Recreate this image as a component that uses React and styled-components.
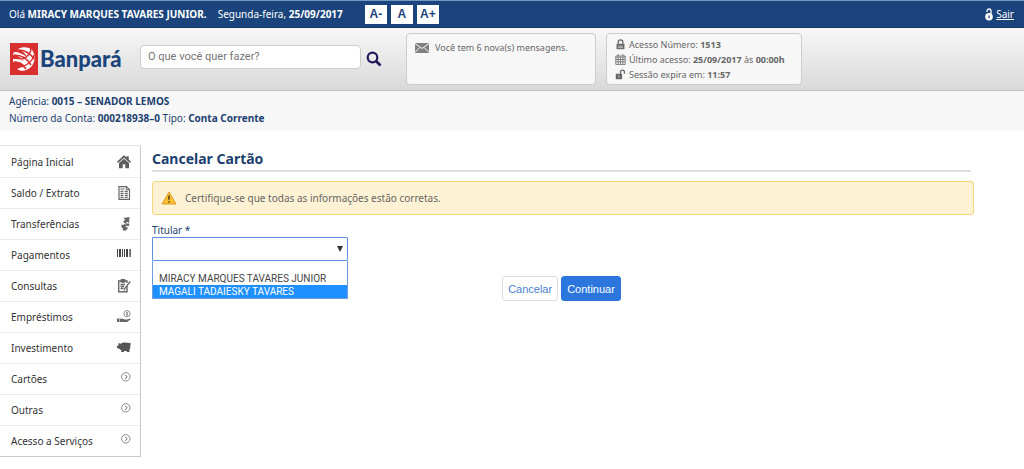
import React, { useState } from 'react';
import styled, { createGlobalStyle, ThemeProvider } from 'styled-components';

const theme = {
    navy: '#1a447b',
    ink: '#1c3f70',
    grey: '#666666',
    line: '#c9c9c9',
    blue: '#2a76dd',
    sans: '"Noto Sans", "Open Sans", sans-serif',
    arial: '"Liberation Sans", Arial, sans-serif',
};

const GlobalStyle = createGlobalStyle`
    * {
        box-sizing: border-box;
    }
    body {
        margin: 0;
        background: #ffffff;
        color: ${theme.ink};
        font-family: ${theme.sans};
        font-size: 10px;
    }
    button, input, select {
        font-family: inherit;
    }
    svg {
        flex: none;
    }
`

const TopBar = styled.div`
    display: flex;
    align-items: center;
    gap: 11px;
    height: 28px;
    padding: 0 10px 0 9px;
    color: #ffffff;
    background: ${props => props.theme.navy};
    border-top: 1px solid #6f9bc4;
    border-bottom: 1px solid #14365f;
`

const Greeting = styled.span`
    white-space: nowrap;
`

const FontSizes = styled.div`
    display: flex;
    gap: 4px;
    margin-left: 11px;
`

const FontButton = styled.button`
    width: 22px;
    height: 19px;
    padding: 0;
    border: 0;
    color: ${props => props.theme.navy};
    background: #ffffff;
    font-family: ${props => props.theme.arial};
    font-size: 12px;
    font-weight: bold;
`

const Exit = styled.a`
    display: flex;
    align-items: center;
    gap: 3px;
    margin-left: auto;
    color: #ffffff;
    text-decoration: none;
    span {
        text-decoration: underline;
    }
`

const Header = styled.header`
    display: flex;
    align-items: center;
    height: 63px;
    padding: 0 10px;
    background: linear-gradient(#f7f7f7, #d9d9d9);
    border-bottom: 1px solid #c4c4c4;
`

const Logo = styled.a`
    display: flex;
    align-items: center;
    gap: 2px;
    width: 130px;
    color: ${props => props.theme.navy};
    font-family: Lato, sans-serif;
    font-size: 22px;
    font-weight: 900;
    line-height: 30px;
    text-decoration: none;
`

const Search = styled.form`
    display: flex;
    align-items: center;
    gap: 5px;
    margin: 0 24px 5px 0;
    input {
        width: 221px;
        height: 24px;
        padding: 0 7px;
        border: 1px solid #cccccc;
        border-radius: 4px;
        background: #ffffff;
        font-family: Roboto, sans-serif;
        font-size: 11px;
    }
    input::placeholder {
        color: #757575;
    }
    button {
        display: flex;
        margin-top: 4px;
        padding: 0;
        border: 0;
        background: none;
    }
`

const InfoBox = styled.div`
    width: ${props => props.$width};
    height: 52px;
    margin-right: 10px;
    padding: 3px 8px;
    color: ${props => props.theme.grey};
    background: #f7f7f7;
    border: 1px solid #cccccc;
    border-radius: 4px;
    font-size: 9px;
`

const InfoLine = styled.div`
    display: flex;
    align-items: center;
    gap: ${props => props.$gap || '3px'};
    height: ${props => props.$height || '15px'};
    white-space: nowrap;
`

const Account = styled.section`
    padding: 2px 9px 4px;
    background: #f7f7f7;
    line-height: 17px;
    p {
        margin: 0;
    }
`

const Page = styled.div`
    display: flex;
    align-items: flex-start;
    margin-top: 14px;
`

const Menu = styled.nav`
    flex: none;
    width: 141px;
    border: 1px solid ${props => props.theme.line};
    border-left: 0;
    border-top-color: #e5e5e5;
`

const MenuItem = styled.a`
    display: flex;
    align-items: center;
    justify-content: space-between;
    height: 31px;
    padding: 0 9px 0 11px;
    color: #333333;
    text-decoration: none;
    & + & {
        border-top: 1px solid #e9e9e9;
    }
    svg {
        width: 14px;
        height: 14px;
    }
`

const Content = styled.main`
    flex: 1;
    padding: 3px 50px 0 11px;
`

const Title = styled.h1`
    margin: 0 3px 9px 0;
    color: ${props => props.theme.ink};
    border-bottom: 2px solid #dddddd;
    font-size: 14px;
    line-height: 22px;
`

const Alert = styled.div`
    display: flex;
    align-items: center;
    gap: 8px;
    height: 34px;
    padding: 0 8px;
    color: ${props => props.theme.grey};
    background: #fdf2d3;
    border: 1px solid #f5d77c;
    border-radius: 3px;
`

const Label = styled.label`
    display: block;
    margin-top: 8px;
    line-height: 14px;
`

const SelectWrap = styled.div`
    position: relative;
    width: 196px;
    select {
        display: block;
        width: 100%;
        height: 24px;
        padding: 0 6px;
        appearance: none;
        border: 1px solid #5b8fe0;
        border-radius: 1px;
        background: #ffffff;
        outline: 0;
    }
`

const Arrow = styled.svg`
    position: absolute;
    top: 9px;
    right: 5px;
    pointer-events: none;
`

const Options = styled.ul`
    position: absolute;
    top: 100%;
    left: 0;
    width: 100%;
    margin: 0;
    padding: 0;
    list-style: none;
    background: #ffffff;
    border: 1px solid #6f9be0;
    border-top: 0;
    font-family: Roboto, sans-serif;
`

const Option = styled.li`
    height: 13px;
    padding-left: 6px;
    color: ${props => (props.$active ? '#ffffff' : '#444444')};
    background: ${props => (props.$active ? '#1e90ff' : 'transparent')};
    line-height: 13px;
    white-space: nowrap;
    &:first-child {
        height: 11px;
    }
`

const Actions = styled.div`
    display: flex;
    justify-content: center;
    gap: 3px;
    margin: 15px 3px 0 0;
`

const Action = styled.button`
    height: 25px;
    padding: 0 5px;
    color: ${props => (props.$primary ? '#ffffff' : '#4b7fd0')};
    background: ${props => (props.$primary ? props.theme.blue : '#ffffff')};
    border: 1px solid ${props => (props.$primary ? props.theme.blue : '#dddddd')};
    border-radius: 3px;
    font-family: ${props => props.theme.arial};
    font-size: 11px;
`

const Svg = ({ children, size = 14, ...rest }) => (
    <svg width={size} height={size} viewBox="0 0 14 14" fill="none" stroke="#666666" aria-hidden="true" {...rest}>
        {children}
    </svg>
)

const icons = {
    home: (
        <Svg fill="#5c5c5c" stroke="none">
            <path d="M7 .3l2.5 2.2V1.2h2.2v3.3L14 6.7l-1 1.2-6-5.2-6 5.2-1-1.2z" />
            <path d="M2 8l5-4.3L12 8v5.3H8.3V9.3H5.7v4H2z" />
        </Svg>
    ),
    statement: (
        <Svg>
            <path d="M2 .7h7.5L12.5 3.7v9.6H2z" strokeWidth="1.2" />
            <path d="M9.3.7v3h3" />
            <path d="M3.5 3h4M3.5 5.3h3M7.8 5.3h3M3.5 7.3h3M7.8 7.3h3M3.5 9.3h3M7.8 9.3h3M3.5 11.3h3M7.8 11.3h3" strokeWidth="1.2" />
        </Svg>
    ),
    transfer: (
        <Svg fill="#666666" stroke="none">
            <path d="M12.5 0L12 6l-1.6-1.3-2 2.1-2.3-2.1 2-2L6.500 1z" />
            <path d="M4.500 7.600L6.300 8l1.500-1.200 2 1.700-1.500 1.600 3 .400L9 13.500H5.500l.600-1.900-1.800-1.600z" />
            <path d="M8.500 6.500h3.700V9H9.800z" />
        </Svg>
    ),
    barcode: (
        <Svg stroke="none" fill="#444444">
            <path d="M0 1h1v8H0zM2 1h2v8H2zM5 1h1v8H5zM7 1h1v8H7zM9 1h2v8H9zM12 1h.6v8H12zM13.2 1h.8v8h-.8z" />
        </Svg>
    ),
    clipboard: (
        <Svg>
            <path d="M10 7v5.8H1.7V2H10v2" strokeWidth="1.4" />
            <path d="M4 .5h4v2.7H4z" fill="#666666" />
            <path d="M3.500 5.500h4.500M3.500 7.500h3.500M3.500 9.500h3M13.300 2.500L8 9l-.8 2.200" strokeWidth="1.3" />
        </Svg>
    ),
    loan: (
        <Svg>
            <circle cx="10" cy="3.700" r="3.100" stroke="#888888" />
            <path d="M10 2v3.400M9 2.900h2M9 4.700h2" strokeWidth=".7" />
            <path d="M0 8.500h2.500V12H0zM3 8.700h3l1.500.9H10l3-1.100.8.8L10 12H3z" fill="#666666" stroke="none" />
        </Svg>
    ),
    pig: (
        <Svg fill="#555555" stroke="none">
            <path d="M0 5l1.600-.8L1.500 2l2.200.8C5 1.300 9.500 1 11.500 2L13 1.700l1 1.500-.8.8c.5 1.900.1 3.300-.7 4.400V11h-2.700V9.900H7V11H4.300V9.500L2.700 8 0 7z" />
        </Svg>
    ),
    chevron: (
        <Svg>
            <circle cx="8.800" cy="4.800" r="4.200" stroke="#888888" />
            <path d="M8 2.700l2.100 2.100L8 6.900" />
        </Svg>
    ),
}

const Padlock = ({ open, color = '#666666' }) => (
    <Svg size={11} stroke={color}>
        <path d={open ? 'M7 6V4a2.500 2.500 0 015 0v2' : 'M4 6V4a3 3 0 016 0v2'} strokeWidth="1.6" />
        <path d={open ? 'M1 6h8v7H1z' : 'M2 6h10v7H2z'} fill={color} stroke="none" />
        <path d={open ? 'M5 8v3' : 'M4 9h6M4 11h6'} stroke="#f7f7f7" strokeWidth=".8" />
    </Svg>
)

const menu = [
    ['Página Inicial', 'home'],
    ['Saldo / Extrato', 'statement'],
    ['Transferências', 'transfer'],
    ['Pagamentos', 'barcode'],
    ['Consultas', 'clipboard'],
    ['Empréstimos', 'loan'],
    ['Investimento', 'pig'],
    ['Cartões', 'chevron'],
    ['Outras', 'chevron'],
    ['Acesso a Serviços', 'chevron'],
]

const holders = ['', 'MIRACY MARQUES TAVARES JUNIOR', 'MAGALI TADAIESKY TAVARES']

export default function App () {
    const [holder, setHolder] = useState('')
    const [active, setActive] = useState(2)

    return (
        <ThemeProvider theme={theme}>
            <GlobalStyle />
            <TopBar>
                <Greeting>Olá <b>MIRACY MARQUES TAVARES JUNIOR.</b></Greeting>
                <Greeting>Segunda-feira, <b>25/09/2017</b></Greeting>
                <FontSizes>
                    <FontButton>A-</FontButton>
                    <FontButton>A</FontButton>
                    <FontButton>A+</FontButton>
                </FontSizes>
                <Exit href="#sair">
                    <svg width="8" height="13" viewBox="0 0 8 13" fill="none" aria-hidden="true">
                        <path d="M2 4V3a2 2 0 014 0v4" stroke="#ffffff" strokeWidth="1.3" />
                        <circle cx="4" cy="8.8" r="3.8" fill="#ffffff" />
                        <path d="M4 7.5v2.8" stroke="#1a447b" strokeWidth="1.2" />
                    </svg>
                    <span>Sair</span>
                </Exit>
            </TopBar>
            <Header>
                <Logo href="#inicio">
                    <svg width="28" height="32" viewBox="0 0 28 32" fill="none" aria-hidden="true">
                        <path d="M0 0h28v32H0z" fill="#d9302f" />
                        <path d="M8 6c5-3 11-2 14 1 4 5 3 13-1 17-4 4-10 5-14 2 3-1 5-2 7-4-3-3-7-4-11-3v-3c4 0 8 0 11 2-3-4-7-6-11-6l1-3c5 0 9 2 13 5-2-4-5-7-10-8z" fill="#ffffff" />
                        <path d="M8 7c7 0 12 3 16 9M4 12c7 0 13 3 17 10M4 19c5 0 9 2 12 7" stroke="#d9302f" strokeWidth="1.6" />
                        <path d="M21 5c0 6-3 9-9 11M24 12c-1 6-5 9-12 12" stroke="#d9302f" strokeWidth="1.4" />
                    </svg>
                    Banpará
                </Logo>
                <Search onSubmit={e => e.preventDefault()}>
                    <input type="text" aria-label="Busca" placeholder="O que você quer fazer?" />
                    <button aria-label="Buscar">
                        <svg width="16" height="16" viewBox="0 0 16 16" fill="none" stroke="#201a5c" aria-hidden="true">
                            <circle cx="6.5" cy="6.5" r="4.8" strokeWidth="2.2" />
                            <path d="M10 10l4.5 4.5" strokeWidth="2.8" />
                        </svg>
                    </button>
                </Search>
                <InfoBox $width="190px">
                    <InfoLine $gap="6px" $height="21px">
                        <svg width="14" height="10" viewBox="0 0 14 10" aria-hidden="true">
                            <path d="M0 0h14v10H0z" fill="#808080" />
                            <path d="M0 .5l7 5 7-5M0 9.5l4.8-5M14 9.5l-4.8-5" fill="none" stroke="#f7f7f7" />
                        </svg>
                        Você tem 6 nova(s) mensagens.
                    </InfoLine>
                </InfoBox>
                <InfoBox $width="196px">
                    <InfoLine>
                        <Padlock />
                        <span>Acesso Número: <b>1513</b></span>
                    </InfoLine>
                    <InfoLine>
                        <Svg size={11}>
                            <path d="M1 2.5h12v10.800H1zM1 4h12M1 7h12M1 10h12M4 4v9M7 4v9M10 4v9M4 0v3M10 0v3" />
                        </Svg>
                        <span>Último acesso: <b>25/09/2017</b> às <b>00:00h</b></span>
                    </InfoLine>
                    <InfoLine>
                        <Padlock open />
                        <span>Sessão expira em: <b>11:57</b></span>
                    </InfoLine>
                </InfoBox>
            </Header>
            <Account>
                <p>Agência: <b>0015 – SENADOR LEMOS</b></p>
                <p>Número da Conta: <b>000218938–0</b> Tipo: <b>Conta Corrente</b></p>
            </Account>
            <Page>
                <Menu>
                    {menu.map(([text, icon]) => (
                        <MenuItem key={text} href="#menu">
                            {text}
                            {icons[icon]}
                        </MenuItem>
                    ))}
                </Menu>
                <Content>
                    <Title>Cancelar Cartão</Title>
                    <Alert>
                        <svg width="16" height="14" viewBox="0 0 16 14" aria-hidden="true">
                            <path d="M8 1l7 12H1z" fill="#fbc02d" stroke="#d99a2b" strokeLinejoin="round" />
                            <path d="M7.2 4.5h1.6v4.3H7.200zM7.200 10h1.600v1.600H7.200z" fill="#5a4320" />
                        </svg>
                        Certifique-se que todas as informações estão corretas.
                    </Alert>
                    <Label htmlFor="titular">Titular *</Label>
                    <SelectWrap>
                        <select id="titular" value={holder} onChange={e => setHolder(e.target.value)}>
                            {holders.map(name => <option key={name} value={name}>{name}</option>)}
                        </select>
                        <Arrow width="6" height="6" viewBox="0 0 6 6" aria-hidden="true">
                            <path d="M0 0h6L3 6z" fill="#333333" />
                        </Arrow>
                        <Options role="listbox" aria-label="Titular">
                            {holders.map((name, i) => (
                                <Option
                                    key={name}
                                    role="option"
                                    aria-selected={i === active}
                                    $active={i === active}
                                    onMouseEnter={() => setActive(i)}
                                    onClick={() => setHolder(name)}
                                >
                                    {name}
                                </Option>
                            ))}
                        </Options>
                    </SelectWrap>
                    <Actions>
                        <Action>Cancelar</Action>
                        <Action $primary>Continuar</Action>
                    </Actions>
                </Content>
            </Page>
        </ThemeProvider>
    )
}
